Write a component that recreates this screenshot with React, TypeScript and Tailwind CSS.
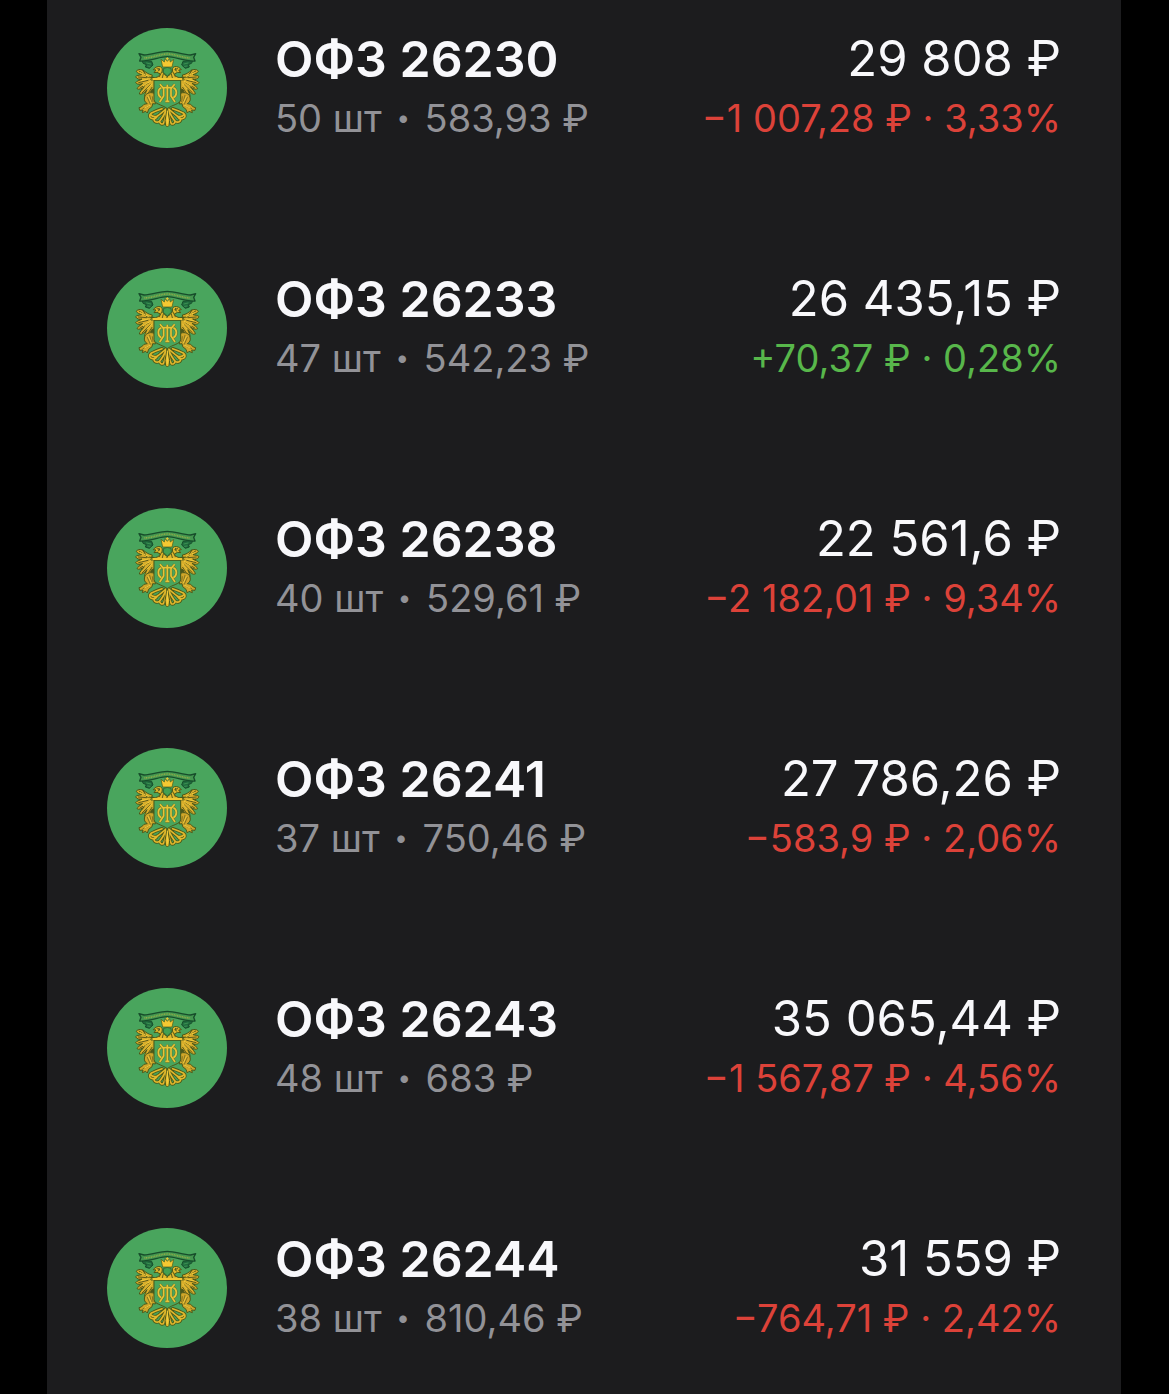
import clsx from "clsx";

type Bond = {
    name: string;
    amount: string;
    price: string;
    total: string;
    change: string;
    percent: string;
    positive?: boolean;
};

const bonds: Bond[] = [
    { name: "ОФЗ 26230", amount: "50 шт", price: "583,93 ₽", total: "29 808 ₽", change: "−1 007,28 ₽", percent: "3,33%" },
    { name: "ОФЗ 26233", amount: "47 шт", price: "542,23 ₽", total: "26 435,15 ₽", change: "+70,37 ₽", percent: "0,28%", positive: true },
    { name: "ОФЗ 26238", amount: "40 шт", price: "529,61 ₽", total: "22 561,6 ₽", change: "−2 182,01 ₽", percent: "9,34%" },
    { name: "ОФЗ 26241", amount: "37 шт", price: "750,46 ₽", total: "27 786,26 ₽", change: "−583,9 ₽", percent: "2,06%" },
    { name: "ОФЗ 26243", amount: "48 шт", price: "683 ₽", total: "35 065,44 ₽", change: "−1 567,87 ₽", percent: "4,56%" },
    { name: "ОФЗ 26244", amount: "38 шт", price: "810,46 ₽", total: "31 559 ₽", change: "−764,71 ₽", percent: "2,42%" },
];

// Left half of the eagle, the right half is mirrored
function EagleHalf() {
    return (
        <g strokeLinejoin="round" strokeLinecap="round">
            {/* ribbon tail */}
            <path d="M127 120 L155 124 L159 135 L148 145 L136 141 L139 134 L130 130Z" fill="#1f6b3d" stroke="#174d2b" strokeWidth="3" />
            <path d="M140 129 L152 132 M143 138 L150 139" stroke="#4ba45c" strokeWidth="2" />
            {/* shadow between wing and shield */}
            <path d="M128 158 L163 172 L163 240 L148 232 L152 208 L138 222 L120 205 L116 178Z" fill="#4b5a1c" />
            {/* wing feathers */}
            <g fill="#d9ae2b" stroke="#4c5818" strokeWidth="3">
                <path d="M155 174 C143 166 134 158 128 150 C121 147 111 148 109 154 C112 160 119 162 125 164 C117 166 110 166 107 170 C110 178 119 178 126 177 C118 182 109 183 107 188 C112 195 121 193 128 190 C121 197 112 201 111 206 C116 210 126 207 133 200 C127 208 118 216 118 222 C125 225 135 218 141 208 C139 216 132 225 134 230 C143 229 151 219 155 209 L163 206 L163 180Z" />
                <path d="M129 150 C139 158 145 163 157 165 L155 172 L142 171Z" />
            </g>
            <path d="M117 153 L136 166 M115 171 L140 173 M116 188 L144 181 M120 204 L147 188 M127 218 L151 195 M143 222 L156 202" stroke="#5d5b1a" strokeWidth="3" fill="none" />
            <path d="M121 158 L145 169 M124 182 L144 177 M130 197 L151 184 M141 208 L156 192" stroke="#f0ca3a" strokeWidth="3" fill="none" />
            {/* neck and head */}
            <path d="M161 174 C170 173 179 169 181 162 L171 157 L162 158 L168 150 L160 149 C164 143 172 138 181 140 C187 142 188 149 186 154 L194 164 L203 170 L203 177 L153 180 C150 177 153 174 161 174Z" fill="#e0b82c" stroke="#4c5818" strokeWidth="3" />
            <path d="M171 146 L180 149 L174 153 M185 156 L178 170 M190 162 L187 173" stroke="#5d5b1a" strokeWidth="3" fill="none" />
            <circle cx="177" cy="146" r="2" fill="#315022" />
            {/* leg */}
            <path d="M160 219 C149 215 136 221 134 231 C131 240 135 247 142 251 L132 253 L124 261 L117 263 L119 271 L129 270 L127 278 L137 274 L142 279 L146 268 L156 260 L158 251 L166 252 L163 222Z" fill="#d0a62a" stroke="#4c5818" strokeWidth="3" />
            <path d="M149 226 L155 248 M142 232 L151 253 M157 230 L159 245 M129 266 L146 259" stroke="#5d5b1a" strokeWidth="2" fill="none" />
            <path d="M145 230 L154 248 M134 264 L150 256" stroke="#f0ca3a" strokeWidth="3" fill="none" />
            {/* tail feathers */}
            <g fill="none">
                <path d="M198 267 C191 274 181 281 174 287 C167 291 158 291 151 283 M199 269 C193 283 184 298 178 304 C170 309 160 304 163 298 M200 269 C198 285 195 302 190 311 C185 314 179 310 179 304 M186 266 C177 269 165 273 153 280 C147 285 148 292 154 295 C161 298 169 295 173 287" stroke="#4c5818" strokeWidth="10" />
                <path d="M198 267 C191 274 181 281 174 287 C167 291 158 291 151 283 M199 269 C193 283 184 298 178 304 C170 309 160 304 163 298 M200 269 C198 285 195 302 190 311 C185 314 179 310 179 304 M186 266 C177 269 165 273 153 280 C147 285 148 292 154 295 C161 298 169 295 173 287" stroke="#e0b82c" strokeWidth="5" />
            </g>
        </g>
    );
}

function MinfinLogo() {
    return (
        <svg viewBox="21 24 360 360" className="h-[120px] w-[120px] shrink-0" aria-hidden="true">
            <circle cx="201" cy="204" r="180" fill="#49a55d" />
            <EagleHalf />
            <g transform="translate(404 0) scale(-1 1)">
                <EagleHalf />
            </g>
            {/* central tail feather */}
            <path d="M202 263 L209 302 L207 316 L202 321 L197 316 L195 302Z" fill="#e5bd2d" stroke="#4c5818" strokeWidth="3" />
            <path d="M202 272 L202 312" stroke="#f5d13f" strokeWidth="3" />
            {/* ribbon */}
            <path d="M117 101 L132 105 C158 103 180 94 202 94 C224 94 246 103 272 105 L287 101 L281 112 L285 123 C254 125 226 110 202 110 C178 110 150 125 119 123 L123 112Z" fill="#43964f" stroke="#174d2b" strokeWidth="4" strokeLinejoin="round" />
            <path d="M133 114 C159 113 181 102 202 102 C223 102 245 113 271 114" fill="none" stroke="#8fab48" strokeWidth="5" strokeDasharray="3 2" />
            {/* crown */}
            <path d="M188 141 L183 118 L193 126 L195 116 L202 124 L209 116 L211 126 L221 118 L216 141Z" fill="#f5c832" stroke="#4c5818" strokeWidth="2" strokeLinejoin="round" />
            <path d="M202 112 L202 121 M198 116 L206 116" stroke="#f5c832" strokeWidth="3" />
            <path d="M191 145 Q202 140 213 145 L214 157 L202 168 L190 157Z" fill="#43a052" stroke="#315022" strokeWidth="2" />
            {/* shield */}
            <path d="M162 181 L242 181 L242 239 C240 253 219 253 202 266 C185 253 164 253 162 239Z" fill="#49a55d" stroke="#4c5818" strokeWidth="3" />
            <path d="M158 177 L246 177" stroke="#f0c735" strokeWidth="6" />
            {/* monogram */}
            <g fill="none" stroke="#607126" strokeWidth="8">
                <path d="M190 203 L214 203 M202 194 L202 244 M196 244 L208 244 M180 193 L191 206 L191 228 L179 246 M224 193 L213 206 L213 228 L225 246" />
                <path d="M184 203 C172 207 172 227 184 233 M220 203 C232 207 232 227 220 233" />
            </g>
            <g fill="none" stroke="#e5c437" strokeWidth="5">
                <path d="M190 203 L214 203 M202 194 L202 244 M196 244 L208 244 M180 193 L191 206 L191 228 L179 246 M224 193 L213 206 L213 228 L225 246" />
                <path d="M184 203 C172 207 172 227 184 233 M220 203 C232 207 232 227 220 233" />
            </g>
        </svg>
    );
}

function BondRow({ bond }: { bond: Bond }) {
    return (
        <li className="flex items-center gap-12">
            <MinfinLogo />
            <div className="flex min-w-0 flex-1 justify-between gap-4 whitespace-nowrap">
                <div>
                    <h2 className="text-[50px] leading-[60px] font-semibold text-[#f8f8fb]">{bond.name}</h2>
                    <p className="text-[38px] leading-[58px] text-[#929297]">
                        {bond.amount} <span className="mx-1 align-[6px] text-2xl leading-none">•</span> {bond.price}
                    </p>
                </div>
                <div className="text-right">
                    <p className="text-[49px] leading-[60px] text-[#f8f8fb]">{bond.total}</p>
                    <p className={clsx("text-[38px] leading-[58px]", bond.positive ? "text-[#58b74b]" : "text-[#dc4239]")}>
                        {bond.change} · {bond.percent}
                    </p>
                </div>
            </div>
        </li>
    );
}

export default function App() {
    return (
        <div className="min-h-screen bg-black pr-12 pl-[47px] font-['Inter',sans-serif]">
            <main className="min-h-screen bg-[#1c1c1e] px-[60px] pt-7 pb-[46px]">
                <ul className="flex flex-col gap-[120px]">
                    {bonds.map((bond) => (
                        <BondRow key={bond.name} bond={bond} />
                    ))}
                </ul>
            </main>
        </div>
    );
}
